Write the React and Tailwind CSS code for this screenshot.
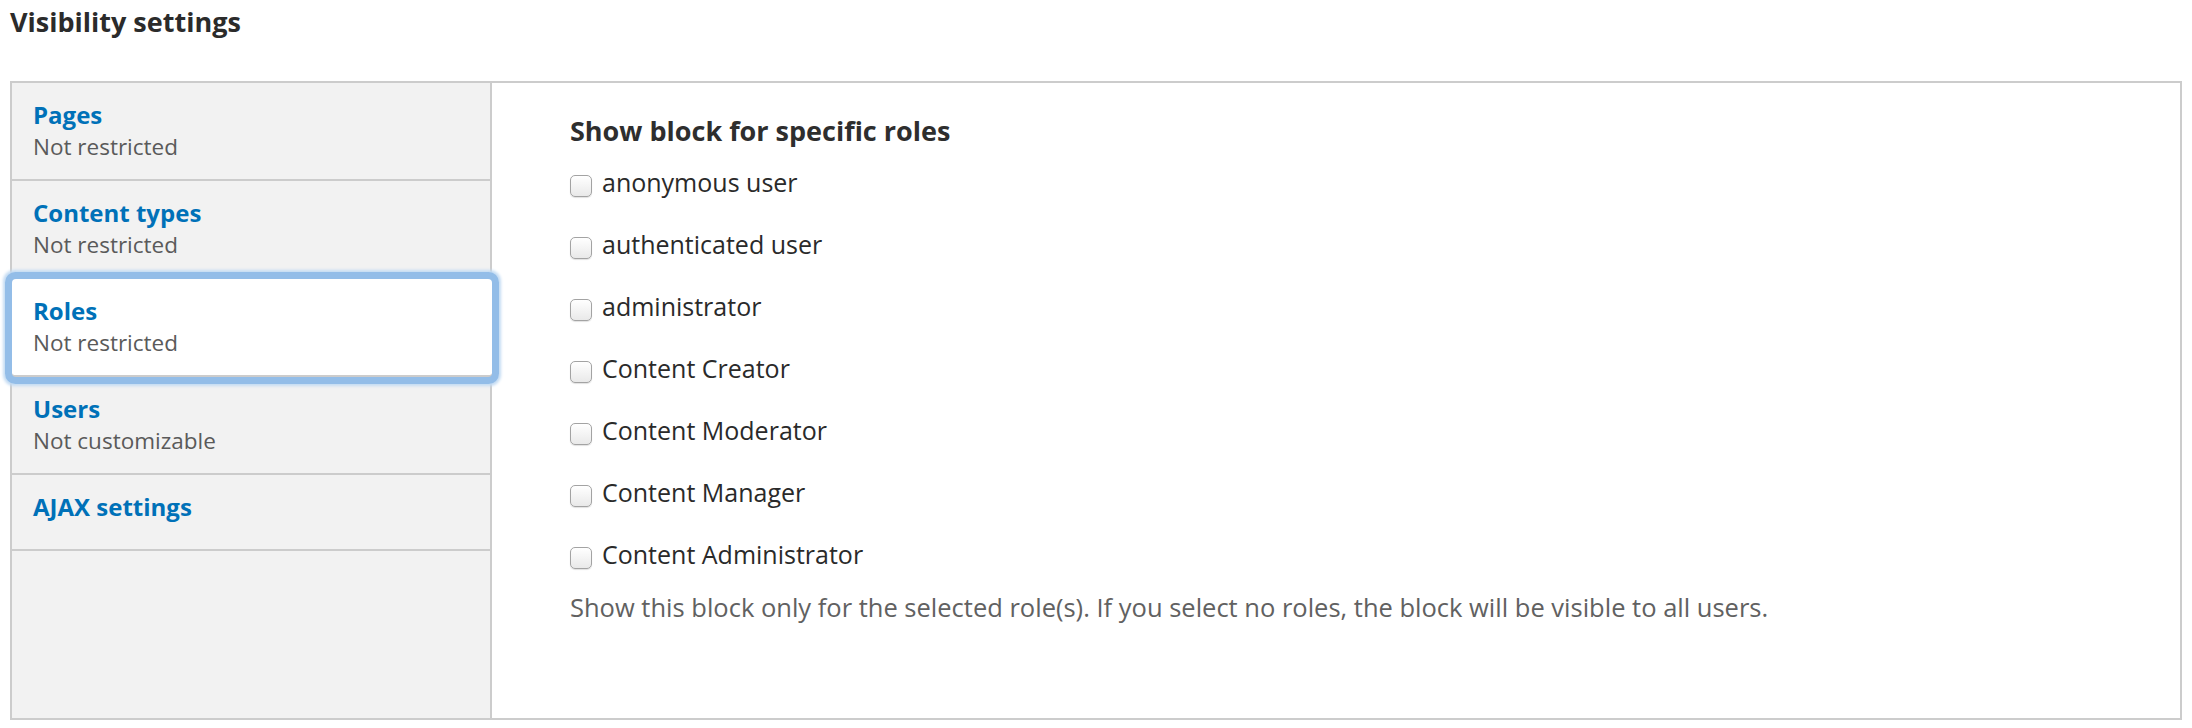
const tabs = [
  { title: 'Pages', summary: 'Not restricted' },
  { title: 'Content types', summary: 'Not restricted' },
  { title: 'Roles', summary: 'Not restricted', selected: true },
  { title: 'Users', summary: 'Not customizable' },
  { title: 'AJAX settings', summary: '' },
];

const roles = [
  'anonymous user',
  'authenticated user',
  'administrator',
  'Content Creator',
  'Content Moderator',
  'Content Manager',
  'Content Administrator',
];

function Checkbox() {
  return (
    <span className="mt-[9px] block h-[22px] w-[22px] shrink-0 rounded-[5px] border border-[#a3a3a3] bg-linear-to-b from-white to-[#e9e9e9] shadow-[0_1px_1px_rgba(0,0,0,0.12)]" />
  );
}

export default function App() {
  return (
    <div className="min-h-screen bg-white px-[10px] pt-[4px] font-['Open_Sans',sans-serif]">
      <h2 className="text-[27px] font-bold leading-[36px] text-[#2b2b2b]">Visibility settings</h2>

      <div className="mt-[41px] flex h-[639px] border-2 border-[#cccccc]">
        <ul className="w-[480px] shrink-0 border-r-2 border-[#cccccc] bg-[#f2f2f2]">
          {tabs.map((t) => (
            <li
              key={t.title}
              className={
                t.selected
                  ? 'relative z-10 -mr-[2px] rounded-[4px] border-b-2 border-[#cccccc] bg-white px-[21px] pt-[16px] pb-[16px] shadow-[0_0_0_7px_#93bde8,0_0_3px_9px_#c3dbf3]'
                  : t.summary
                  ? 'border-b-2 border-[#cccccc] px-[21px] pt-[16px] pb-[16px]'
                  : 'border-b-2 border-[#cccccc] px-[21px] pt-[16px] pb-[26px]'
              }
            >
              <div className="text-[24px] font-bold leading-[32px] text-[#0071b8]">{t.title}</div>
              {t.summary && (
                <div className="text-[22.5px] leading-[32px] text-[#5a5a5a]">{t.summary}</div>
              )}
            </li>
          ))}
        </ul>

        <div className="flex-1 pl-[78px] pt-[30px]">
          <h3 className="mb-[17px] text-[27px] font-bold leading-[36px] text-[#2e2e2e]">
            Show block for specific roles
          </h3>
          <div className="flex flex-col gap-[30px]">
            {roles.map((r) => (
              <label key={r} className="flex items-start gap-[10px]">
                <Checkbox />
                <span className="text-[25px] leading-[32px] text-[#2a2a2a]">{r}</span>
              </label>
            ))}
          </div>
          <p className="mt-[21px] text-[25.5px] leading-[32px] text-[#616161]">
            Show this block only for the selected role(s). If you select no roles, the block will be visible to all users.
          </p>
        </div>
      </div>
    </div>
  );
}
